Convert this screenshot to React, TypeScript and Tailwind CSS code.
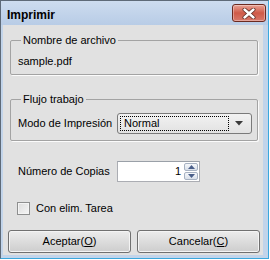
import React from "react";

function CloseButton() {
  return (
    <div className="mt-[3px] w-[34px] h-[18px] rounded-[3px] border border-[#6b2a20] bg-gradient-to-b from-[#e8a295] via-[#cf5a48] to-[#d8786a] flex items-center justify-center shadow-[inset_0_0_0_1px_rgba(255,255,255,0.35)]">
      <svg width="14" height="11" viewBox="0 0 14 11">
        <path
          d="M2.5 1.5 L11.5 9.5 M11.5 1.5 L2.5 9.5"
          stroke="#5a2a22"
          strokeWidth="4"
          strokeLinecap="round"
        />
        <path
          d="M2.5 1.5 L11.5 9.5 M11.5 1.5 L2.5 9.5"
          stroke="#ffffff"
          strokeWidth="2.4"
          strokeLinecap="round"
        />
      </svg>
    </div>
  );
}

function GroupBox({
  title,
  children,
  className,
}: {
  title: string;
  children: React.ReactNode;
  className?: string;
}) {
  return (
    <fieldset
      className={`ml-[7px] mr-[5px] border border-[#a3a3a3] rounded-[2px] shadow-[1px_1px_0_#fbfbfb] ${className ?? ""}`}
    >
      <legend className="ml-[3px] px-[2px] leading-[13px]">{title}</legend>
      {children}
    </fieldset>
  );
}

function Select() {
  return (
    <div className="w-[135px] h-[21px] rounded-[3px] border border-[#7a7a7a] bg-gradient-to-b from-[#f2f2f2] to-[#e2e2e2] flex items-center p-[2px]">
      <div className="flex-1 h-full border border-dotted border-black flex items-center pl-[3px]">
        Normal
      </div>
      <div className="w-[20px] h-full flex items-center justify-center">
        <svg width="8" height="5" viewBox="0 0 8 5">
          <path d="M0 0 H8 L4 4.5 Z" fill="#3a3a3a" />
        </svg>
      </div>
    </div>
  );
}

function SpinArrow({ up }: { up?: boolean }) {
  return (
    <div className="flex-1 rounded-[2px] border border-[#a7b2c2] bg-gradient-to-b from-[#f6f8fb] to-[#d9e0ea] flex items-center justify-center">
      <svg width="7" height="4" viewBox="0 0 7 4">
        <path d={up ? "M0 4 H7 L3.5 0 Z" : "M0 0 H7 L3.5 4 Z"} fill="#4a5f8a" />
      </svg>
    </div>
  );
}

function Spinner() {
  return (
    <div className="w-[83px] h-[21px] border border-[#abadb3] border-t-[#9aa0a8] bg-white flex items-stretch">
      <div className="flex-1 flex items-center justify-end pr-[2px]">1</div>
      <div className="w-[16px] flex flex-col gap-[1px] p-[1px]">
        <SpinArrow up />
        <SpinArrow />
      </div>
    </div>
  );
}

function Button({ label, hot }: { label: string; hot: string }) {
  return (
    <div className="h-[23px] flex-1 rounded-[3px] border border-[#707070] bg-gradient-to-b from-[#ececec] to-[#cdcdcd] shadow-[inset_0_0_0_1px_#f4f4f4] flex items-center justify-center">
      {label}(<span className="underline">{hot}</span>)
    </div>
  );
}

export default function App() {
  return (
    <div className="w-[270px] h-[260px] bg-white">
      <div className="w-[269px] h-[259px] flex flex-col bg-[#c2d4ea] border-l border-t border-[#5e6a78] border-r-[#3ba7dc] border-b-[#3ba7dc] border-r border-b text-[11px] text-black font-['Liberation_Sans',Arial,sans-serif]">
        <div className="h-[24px] flex items-start justify-between pl-[6px] pr-[2px] bg-gradient-to-b from-[#cddcef] to-[#b8cce6]">
          <span className="mt-[5px] text-[12px] font-bold">Imprimir</span>
          <CloseButton />
        </div>
        <div className="flex-1 ml-[2px] mr-[5px] mb-[3px] bg-[#e1e1e1] flex flex-col">
          <GroupBox title="Nombre de archivo" className="mt-[9px] pl-[7px] pt-[8px] pb-[6px]">
            <div className="leading-[13px]">sample.pdf</div>
          </GroupBox>

          <GroupBox title="Flujo trabajo" className="mt-[18px] pl-[7px] pt-[7px] pb-[6px]">
            <div className="flex items-center">
              <span className="w-[99px]">Modo de Impresión</span>
              <Select />
            </div>
          </GroupBox>

          <div className="mt-[20px] pl-[15px] flex items-center">
            <span className="w-[99px]">Número de Copias</span>
            <Spinner />
          </div>

          <div className="mt-[20px] ml-[14px] flex items-center gap-[6px]">
            <div className="w-[13px] h-[13px] border border-[#8e8f8f] bg-gradient-to-br from-[#dcdcdc] to-[#f6f6f6] shadow-[inset_0_0_0_1px_#f4f4f4]" />
            <span className="leading-[13px]">Con elim. Tarea</span>
          </div>

          <div className="mt-[15px] ml-[5px] mr-[3px] flex gap-[6px]">
            <Button label="Aceptar" hot="O" />
            <Button label="Cancelar" hot="C" />
          </div>
        </div>
      </div>
    </div>
  );
}
